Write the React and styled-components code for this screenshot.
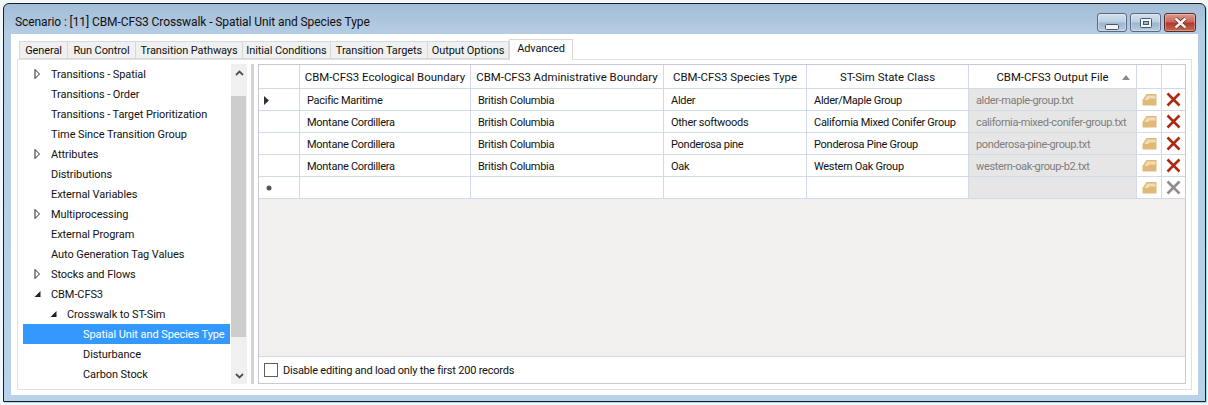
import React from "react";
import styled, { createGlobalStyle } from "styled-components";

const GlobalStyle = createGlobalStyle`
  html, body {
    margin: 0;
    padding: 0;
    background: #f4f7fa;
    font-family: Roboto, "Open Sans", sans-serif;
    font-size: 11px;
    color: #111;
  }
  * { box-sizing: border-box; }
`;

const Page = styled.div`
  width: 1208px;
  height: 405px;
  padding: 3px 2px 3px 3px;
`;
const Window = styled.div`
  width: 1203px;
  height: 399px;
  border: 1px solid #15202b;
  border-radius: 6px 6px 0 0;
  box-shadow: 1px 1px 0 #a7dcef;
  background: linear-gradient(180deg, #a3bdd6 0, #b5cde4 30px, #b9d1e9 100%);
  padding: 0 7px 6px 7px;
  display: flex;
  flex-direction: column;
`;
const TitleBar = styled.div`
  height: 30px;
  flex: none;
  display: flex;
  align-items: flex-start;
  justify-content: space-between;
`;
const Title = styled.div`
  margin: 10px 0 0 4px;
  font-size: 12px;
  letter-spacing: -0.09px;
  line-height: 16px;
  color: #101010;
`;
const Caption = styled.div`
  display: flex;
  gap: 3px;
  margin: 9px 2px 0 0;
`;
const CaptionButton = styled.div`
  width: ${(p) => p.$w}px;
  height: 19px;
  border: 1px solid ${(p) => (p.$close ? "#5a2a28" : "#5a6b7e")};
  border-radius: 3px;
  box-shadow: inset 0 0 0 1px rgba(255, 255, 255, 0.3);
  background: ${(p) =>
    p.$close
      ? "linear-gradient(180deg, #dc9a90 0, #c9695c 45%, #b03a2c 55%, #c66a50 100%)"
      : "linear-gradient(180deg, #d2e0ee 0, #bcd0e4 45%, #9db6cf 55%, #b7cde2 100%)"};
  display: flex;
  align-items: center;
  justify-content: center;
`;
const Client = styled.div`
  flex: 1;
  background: #fff;
  padding: 5px 6px;
  display: flex;
  flex-direction: column;
  min-height: 0;
`;
const TabRow = styled.div`
  display: flex;
  align-items: flex-end;
  height: 20px;
  flex: none;
  padding-left: 2px;
`;
const Tab = styled.div`
  width: ${(p) => p.$w}px;
  height: ${(p) => (p.$active ? 21 : 18)}px;
  border: 1px solid #d9d9d9;
  border-left-width: ${(p) => (p.$active ? 1 : 0)}px;
  border-bottom: ${(p) => (p.$active ? "0" : "1px solid #d9d9d9")};
  background: ${(p) => (p.$active ? "#fff" : "#f0f0f0")};
  margin-bottom: ${(p) => (p.$active ? -1 : 0)}px;
  padding-bottom: ${(p) => (p.$active ? 3 : 0)}px;
  position: relative;
  display: flex;
  align-items: center;
  justify-content: center;
  white-space: nowrap;
  font-size: 11px;
  letter-spacing: -0.1px;

  &:first-child {
    border-left-width: 1px;
  }
`;
const TabPage = styled.div`
  flex: 1;
  min-height: 0;
  border: 1px solid #e0e0e0;
  display: flex;
  padding: 4px 5px 5px 5px;
`;
const TreePane = styled.div`
  width: 224px;
  flex: none;
  display: flex;
  background: #fff;
`;
const Tree = styled.div`
  width: 208px;
  flex: none;
`;
const TreeRow = styled.div`
  height: 20px;
  margin-right: 1px;
  display: flex;
  align-items: center;
  padding-left: ${(p) => 28 + p.$level * 16}px;
  position: relative;
  white-space: nowrap;
  font-size: 11px;
  letter-spacing: -0.08px;
  background: ${(p) => (p.$selected ? "#3399ff" : "transparent")};
  color: ${(p) => (p.$selected ? "#fff" : "#111")};
`;
const Expander = styled.span`
  position: absolute;
  left: ${(p) => 11 + p.$level * 16}px;
  top: 5px;
  width: 7px;
  height: 9px;
  display: flex;
`;
const ScrollBar = styled.div`
  width: 16px;
  flex: none;
  background: #f0f0f0;
  display: flex;
  flex-direction: column;
`;
const ScrollEnd = styled.div`
  height: 17px;
  flex: none;
  display: flex;
  align-items: center;
  justify-content: center;
`;
const ScrollTrack = styled.div`
  flex: 1;
  padding: 15px 1px 30px 0;
  display: flex;
`;
const ScrollThumb = styled.div`
  flex: 1;
  background: #cdcdcd;
`;
const Splitter = styled.div`
  width: 3px;
  flex: none;
  margin: 0 4px;
  background: #d4d4d4;
`;
const GridPane = styled.div`
  flex: 1;
  min-width: 0;
  border: 1px solid #c9c6d6;
  display: flex;
  flex-direction: column;
  background: #f1f0ee;
`;
const Grid = styled.div`
  flex: 1;
  min-height: 0;
`;
const Row = styled.div`
  display: flex;
  height: ${(p) => (p.$header ? 24 : 22)}px;
`;
const Cell = styled.div`
  width: ${(p) => p.$w}px;
  flex: none;
  border-right: ${(p) => (p.$last ? "0" : "1px solid #d2d9e8")};
  border-bottom: 1px solid #d2d9e8;
  background: ${(p) => (p.$readonly ? "#e6e6e6" : "#fff")};
  color: ${(p) => (p.$readonly ? "#7d7d7d" : "#111")};
  display: flex;
  align-items: center;
  justify-content: ${(p) => (p.$center ? "center" : "flex-start")};
  padding-left: ${(p) => (p.$center ? 0 : 7)}px;
  padding-top: ${(p) => (p.$center ? 0 : 1)}px;
  white-space: nowrap;
  position: relative;
  font-size: ${(p) => (p.$head ? 11.4 : 11)}px;
  letter-spacing: ${(p) => (p.$head ? 0 : p.$readonly ? -0.36 : -0.28)}px;
`;
const SortArrow = styled.span`
  position: absolute;
  right: 6px;
  top: 10px;
  width: 0;
  height: 0;
  border-left: 4.5px solid transparent;
  border-right: 4.5px solid transparent;
  border-bottom: 5px solid #8a8a8a;
`;
const Footer = styled.div`
  height: 27px;
  flex: none;
  background: #fff;
  border-top: 1px solid #d2d9e8;
  display: flex;
  align-items: center;
  padding-left: 5px;
  gap: 5px;
  font-size: 11px;
  letter-spacing: -0.2px;
`;
const CheckBox = styled.span`
  width: 14px;
  height: 14px;
  border: 1px solid #5f5f5f;
  background: #fff;
  flex: none;
`;

const FolderIcon = () => (
  <svg width="15" height="13" viewBox="0 0 15 13">
    <path d="M0.5 7 L4.5 1 H14.5 V12.5 H0.5 Z" fill="#e0b878" />
    <path d="M5 2.5 H13.5 V5.5 H7.5 L6 7 H2.5 Z" fill="#f0dcb8" />
  </svg>
);

const DeleteIcon = ({ color }) => (
  <svg width="15" height="15" viewBox="0 0 15 15">
    <path d="M1.5 1.5 L13.5 13.5 M13.5 1.5 L1.5 13.5" stroke={color} strokeWidth="2.6" />
  </svg>
);

const Closed = () => (
  <svg width="7" height="10" viewBox="0 0 7 10">
    <path d="M1 0.5 L5.5 5 L1 9.5 Z" fill="#fff" stroke="#222" strokeWidth="1" />
  </svg>
);
const Open = () => (
  <svg width="7" height="9" viewBox="0 0 7 9">
    <path d="M6.5 2 V8 H0.5 Z" fill="#222" />
  </svg>
);
const Chevron = ({ up }) => (
  <svg width="9" height="6" viewBox="0 0 9 6">
    <path d={up ? "M1 5 L4.5 1.5 L8 5" : "M1 1 L4.5 4.5 L8 1"} fill="none" stroke="#505050" strokeWidth="1.8" />
  </svg>
);

const treeItems = [
  { label: "Transitions - Spatial", level: 1, exp: "closed" },
  { label: "Transitions - Order", level: 1 },
  { label: "Transitions - Target Prioritization", level: 1 },
  { label: "Time Since Transition Group", level: 1 },
  { label: "Attributes", level: 1, exp: "closed" },
  { label: "Distributions", level: 1 },
  { label: "External Variables", level: 1 },
  { label: "Multiprocessing", level: 1, exp: "closed" },
  { label: "External Program", level: 1 },
  { label: "Auto Generation Tag Values", level: 1 },
  { label: "Stocks and Flows", level: 1, exp: "closed" },
  { label: "CBM-CFS3", level: 1, exp: "open" },
  { label: "Crosswalk to ST-Sim", level: 2, exp: "open" },
  { label: "Spatial Unit and Species Type", level: 3, selected: true },
  { label: "Disturbance", level: 3 },
  { label: "Carbon Stock", level: 3 },
];

const tabs = [
  ["General", 49],
  ["Run Control", 68],
  ["Transition Pathways", 107],
  ["Initial Conditions", 88],
  ["Transition Targets", 97],
  ["Output Options", 81],
  ["Advanced", 64],
];

const widths = [41, 171, 193, 143, 162, 168, 25, 23];
const headers = [
  "",
  "CBM-CFS3 Ecological Boundary",
  "CBM-CFS3 Administrative Boundary",
  "CBM-CFS3 Species Type",
  "ST-Sim State Class",
  "CBM-CFS3 Output File",
];
const rows = [
  ["Pacific Maritime", "British Columbia", "Alder", "Alder/Maple Group", "alder-maple-group.txt"],
  ["Montane Cordillera", "British Columbia", "Other softwoods", "California Mixed Conifer Group", "california-mixed-conifer-group.txt"],
  ["Montane Cordillera", "British Columbia", "Ponderosa pine", "Ponderosa Pine Group", "ponderosa-pine-group.txt"],
  ["Montane Cordillera", "British Columbia", "Oak", "Western Oak Group", "western-oak-group-b2.txt"],
  ["", "", "", "", ""],
];

export default function App() {
  return (
    <Page>
      <GlobalStyle />
      <Window>
        <TitleBar>
          <Title>Scenario : [11] CBM-CFS3 Crosswalk - Spatial Unit and Species Type</Title>
          <Caption>
            <CaptionButton $w={30}>
              <svg width="14" height="14" viewBox="0 0 14 14">
                <rect x="0.5" y="8.5" width="13" height="5" rx="1" fill="#f2f5f8" stroke="#46566a" />
              </svg>
            </CaptionButton>
            <CaptionButton $w={31}>
              <svg width="12" height="10" viewBox="0 0 12 10">
                <rect x="0.5" y="0.5" width="11" height="9" rx="1" fill="#f2f5f8" stroke="#46566a" />
                <rect x="3.5" y="3.5" width="5" height="3" fill="#9db6cf" stroke="#46566a" />
              </svg>
            </CaptionButton>
            <CaptionButton $w={32} $close>
              <svg width="15" height="12" viewBox="0 0 15 12">
                <path d="M2.5 1.5 L12.5 10.5 M12.5 1.5 L2.5 10.5" stroke="#5a2a28" strokeWidth="4" />
                <path d="M2.5 1.5 L12.5 10.5 M12.5 1.5 L2.5 10.5" stroke="#f4f0ee" strokeWidth="2.6" />
              </svg>
            </CaptionButton>
          </Caption>
        </TitleBar>
        <Client>
          <TabRow>
            {tabs.map(([label, w]) => (
              <Tab key={label} $w={w} $active={label === "Advanced"}>
                {label}
              </Tab>
            ))}
          </TabRow>
          <TabPage>
            <TreePane>
              <Tree>
                {treeItems.map((item) => (
                  <TreeRow key={item.label} $level={item.level - 1} $selected={item.selected}>
                    {item.exp && (
                      <Expander $level={item.level - 1}>
                        {item.exp === "open" ? <Open /> : <Closed />}
                      </Expander>
                    )}
                    {item.label}
                  </TreeRow>
                ))}
              </Tree>
              <ScrollBar>
                <ScrollEnd>
                  <Chevron up />
                </ScrollEnd>
                <ScrollTrack>
                  <ScrollThumb />
                </ScrollTrack>
                <ScrollEnd>
                  <Chevron />
                </ScrollEnd>
              </ScrollBar>
            </TreePane>
            <Splitter />
            <GridPane>
              <Grid>
                <Row $header>
                  {headers.map((h, i) => (
                    <Cell key={i} $w={widths[i]} $center $head>
                      {h}
                      {i === 5 && <SortArrow />}
                    </Cell>
                  ))}
                  <Cell $w={widths[6]} />
                  <Cell $w={widths[7]} $last />
                </Row>
                {rows.map((row, r) => {
                  const isNew = r === rows.length - 1;
                  return (
                    <Row key={r}>
                      <Cell $w={widths[0]}>
                        {r === 0 && (
                          <svg width="7" height="9" viewBox="0 0 7 9" style={{ marginLeft: -3 }}>
                            <path d="M1 0 L6 4.5 L1 9 Z" fill="#333" />
                          </svg>
                        )}
                        {isNew && (
                          <svg width="6" height="6" viewBox="0 0 6 6">
                            <circle cx="3" cy="3" r="2.5" fill="#555" />
                          </svg>
                        )}
                      </Cell>
                      {row.map((text, c) => (
                        <Cell key={c} $w={widths[c + 1]} $readonly={c === 4}>
                          {text}
                        </Cell>
                      ))}
                      <Cell $w={widths[6]} $center>
                        <FolderIcon />
                      </Cell>
                      <Cell $w={widths[7]} $center $last>
                        <DeleteIcon color={isNew ? "#8e8e8e" : "#ab2a12"} />
                      </Cell>
                    </Row>
                  );
                })}
              </Grid>
              <Footer>
                <CheckBox />
                Disable editing and load only the first 200 records
              </Footer>
            </GridPane>
          </TabPage>
        </Client>
      </Window>
    </Page>
  );
}
